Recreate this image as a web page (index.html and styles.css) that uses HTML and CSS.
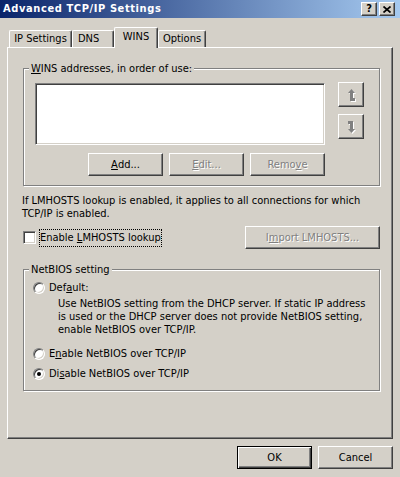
FILE: index.html
```html
<!DOCTYPE html>
<html>
<head>
<meta charset="utf-8">
<title>Advanced TCP/IP Settings</title>
<link rel="stylesheet" href="styles.css">
</head>
<body>
<div class="window">
  <div class="titlebar">
    <span class="title">Advanced TCP/IP Settings</span>
    <div class="caption-btns">
      <div class="cap-btn cap-help">?</div>
      <div class="cap-btn cap-close">
        <svg width="8" height="7" viewBox="0 0 8 7"><path d="M0.5 0.5 L7.5 6.5 M7.5 0.5 L0.5 6.5" stroke="#000" stroke-width="1.7" fill="none"/></svg>
      </div>
    </div>
  </div>

  <div class="tabs">
    <div class="tab tab-ip">IP Settings</div>
    <div class="tab tab-dns">DNS</div>
    <div class="tab tab-wins active">WINS</div>
    <div class="tab tab-options">Options</div>
  </div>

  <div class="panel">
    <div class="group group-wins">
      <div class="group-label"><u>W</u>INS addresses, in order of use:</div>
      <div class="list-row">
        <div class="listbox"></div>
        <div class="order-btns">
          <div class="btn btn-icon">
            <svg width="9" height="12" viewBox="0 0 9 12" class="arrow">
              <polygon points="5.5,1 9,5 7,5 7,10 9,10 9,13 4,13 4,5 2,5" fill="#fff"/>
              <polygon points="4.5,0 8,4 6,4 6,9 8,9 8,12 3,12 3,4 1,4" fill="#808080"/>
            </svg>
          </div>
          <div class="btn btn-icon">
            <svg width="9" height="12" viewBox="0 0 9 12" class="arrow">
              <g transform="rotate(180 4.5 6)">
                <polygon points="3.5,-1 7,3 5,3 5,8 7,8 7,11 2,11 2,3 0,3" fill="#fff"/>
                <polygon points="4.5,0 8,4 6,4 6,9 8,9 8,12 3,12 3,4 1,4" fill="#808080"/>
              </g>
            </svg>
          </div>
        </div>
      </div>
      <div class="btn-row">
        <div class="btn"><u>A</u>dd...</div>
        <div class="btn disabled"><u>E</u>dit...</div>
        <div class="btn disabled">Remo<u>v</u>e</div>
      </div>
    </div>

    <p class="note">If LMHOSTS lookup is enabled, it applies to all connections for which<br>TCP/IP is enabled.</p>

    <div class="check-row">
      <div class="checkbox"></div>
      <span class="check-label focused">Enable <u>L</u>MHOSTS lookup</span>
      <div class="btn disabled btn-import">I<u>m</u>port LMHOSTS...</div>
    </div>

    <div class="group group-netbios">
      <div class="group-label">NetBIOS setting</div>
      <div class="radio-row first">
        <span class="radio"></span>
        <span class="radio-label">Def<u>a</u>ult:</span>
      </div>
      <p class="radio-desc">Use NetBIOS setting from the DHCP server. If static IP address<br>is used or the DHCP server does not provide NetBIOS setting,<br>enable NetBIOS over TCP/IP.</p>
      <div class="radio-row enable">
        <span class="radio"></span>
        <span class="radio-label">E<u>n</u>able NetBIOS over TCP/IP</span>
      </div>
      <div class="radio-row disable">
        <span class="radio checked"><span class="dot"></span></span>
        <span class="radio-label">Di<u>s</u>able NetBIOS over TCP/IP</span>
      </div>
    </div>
  </div>

  <div class="footer">
    <div class="btn btn-default">OK</div>
    <div class="btn">Cancel</div>
  </div>
</div>
</body>
</html>
```

FILE: styles.css
```css
* { box-sizing: border-box; }

html, body {
  margin: 0;
  padding: 0;
  background: #D4D0C8;
}

.window {
  width: 400px;
  height: 477px;
  overflow: hidden;
  background: #D4D0C8;
  display: flex;
  flex-direction: column;
  font-family: "DejaVu Sans Condensed", "DejaVu Sans", "Liberation Sans", sans-serif;
  font-stretch: condensed;
  font-size: 11px;
  color: #000;
}

u { text-decoration: underline; text-underline-offset: 1px; }

/* Title bar */
.titlebar {
  height: 18px;
  flex: none;
  display: flex;
  align-items: center;
  padding: 0 5px 0 3px;
  background: linear-gradient(to right, #0A246A, #A6CAF0);
}
.title {
  color: #fff;
  font-weight: bold;
  line-height: 18px;
  letter-spacing: 0.6px;
  white-space: nowrap;
}
.caption-btns {
  margin-left: auto;
  display: flex;
  gap: 2px;
}
.cap-btn {
  width: 16px;
  height: 14px;
  background: #D4D0C8;
  border: 1px solid;
  border-color: #fff #404040 #404040 #fff;
  box-shadow: inset -1px -1px #808080;
  display: flex;
  align-items: center;
  justify-content: center;
  font-weight: bold;
  font-size: 11px;
  line-height: 12px;
}
.cap-close svg { display: block; margin-left: -1px; }

/* Tabs */
.tabs {
  flex: none;
  height: 20px;
  margin-top: 9px;
  padding-left: 9px;
  display: flex;
  align-items: flex-end;
}
.tab {
  height: 17px;
  line-height: 16px;
  text-align: center;
  white-space: nowrap;
  background: #D4D0C8;
  border-top: 1px solid #fff;
  border-left: 1px solid #fff;
  border-right: 1px solid #404040;
  box-shadow: inset -1px 0 #808080;
  border-radius: 2px 2px 0 0;
}
.tab-ip { width: 63px; }
.tab-dns { width: 42px; text-align: left; padding-left: 5px; }
.tab-wins { width: 44px; }
.tab-options { width: 48px; }
.tab.active {
  height: 21px;
  line-height: 18px;
  margin-bottom: -1px;
  position: relative;
  z-index: 1;
}

/* Panel */
.panel {
  flex: none;
  margin-left: 7px;
  width: 386px;
  height: 392px;
  border-top: 1px solid #fff;
  border-left: 1px solid #fff;
  border-right: 1px solid #404040;
  border-bottom: 1px solid #404040;
  box-shadow: inset -1px -1px #808080;
  padding: 20px 12px 0 15px;
  display: flex;
  flex-direction: column;
}

/* Group boxes */
.group {
  border: 1px solid #808080;
  box-shadow: inset 1px 1px #fff, 1px 1px #fff;
  display: flex;
  flex-direction: column;
}
.group-label {
  align-self: flex-start;
  margin: -7px 0 0 5px;
  padding: 0 2px;
  line-height: 13px;
  background: #D4D0C8;
  white-space: nowrap;
}
.group-wins { padding-bottom: 9px; }

.list-row {
  display: flex;
  align-items: flex-start;
  margin: 8px 0 0 11px;
}
.listbox {
  width: 290px;
  height: 62px;
  background: #fff;
  border: 1px solid;
  border-color: #808080 #fff #fff #808080;
  box-shadow: inset 1px 1px #404040, inset -1px -1px #D4D0C8;
}
.order-btns {
  margin: -1px 0 0 13px;
  display: flex;
  flex-direction: column;
  gap: 7px;
}

/* Buttons */
.btn {
  width: 75px;
  height: 23px;
  background: #D4D0C8;
  border: 1px solid;
  border-color: #fff #404040 #404040 #fff;
  box-shadow: inset -1px -1px #808080;
  display: flex;
  align-items: center;
  justify-content: center;
  white-space: nowrap;
  line-height: 13px;
  padding-bottom: 1px;
}
.btn.disabled {
  color: #808080;
  text-shadow: 1px 1px #fff;
}
.btn-icon {
  width: 26px;
  height: 25px;
  padding: 0 0 0 1px;
}
.arrow { display: block; overflow: visible; }
.btn-default {
  border-color: #000;
  box-shadow: inset 1px 1px #fff, inset -1px -1px #404040, inset -2px -2px #808080;
}

.btn-row {
  width: 290px;
  margin: 8px 0 0 11px;
  display: flex;
  justify-content: flex-end;
  gap: 6px;
}

/* Note */
.note {
  margin: 8px 0 0 -1px;
  line-height: 13px;
  white-space: nowrap;
}

/* Checkbox row */
.check-row {
  margin-top: 6px;
  height: 23px;
  display: flex;
  align-items: center;
}
.checkbox {
  width: 13px;
  height: 13px;
  background: #fff;
  border: 1px solid;
  border-color: #808080 #fff #fff #808080;
  box-shadow: inset 1px 1px #404040, inset -1px -1px #D4D0C8;
}
.check-label {
  margin-left: 3px;
  height: 18px;
  line-height: 16px;
  padding: 0;
  border: 1px dotted #000;
  white-space: nowrap;
}
.btn-import {
  margin-left: auto;
  width: 135px;
}

/* NetBIOS group */
.group-netbios {
  margin-top: 20px;
  padding-bottom: 10px;
}
.radio-row {
  display: flex;
  align-items: center;
  height: 13px;
  margin-left: 9px;
}
.radio-row.first { margin-top: 5px; }
.radio-row.enable { margin-top: 11px; }
.radio-row.disable { margin-top: 7px; }
.radio {
  width: 12px;
  height: 12px;
  flex: none;
  border-radius: 50%;
  background: #fff;
  border: 1px solid;
  border-color: #808080 #fff #fff #808080;
  box-shadow: inset 1px 1px #404040, inset -1px -1px #D4D0C8;
  display: flex;
  align-items: center;
  justify-content: center;
}
.dot {
  width: 4px;
  height: 4px;
  border-radius: 50%;
  background: #000;
}
.radio-label {
  margin-left: 4px;
  line-height: 13px;
  white-space: nowrap;
}
.radio-desc {
  margin: 3px 0 0 34px;
  line-height: 13px;
  white-space: nowrap;
}

/* Footer */
.footer {
  flex: none;
  margin-top: 7px;
  padding-right: 7px;
  display: flex;
  justify-content: flex-end;
  gap: 6px;
}
```
